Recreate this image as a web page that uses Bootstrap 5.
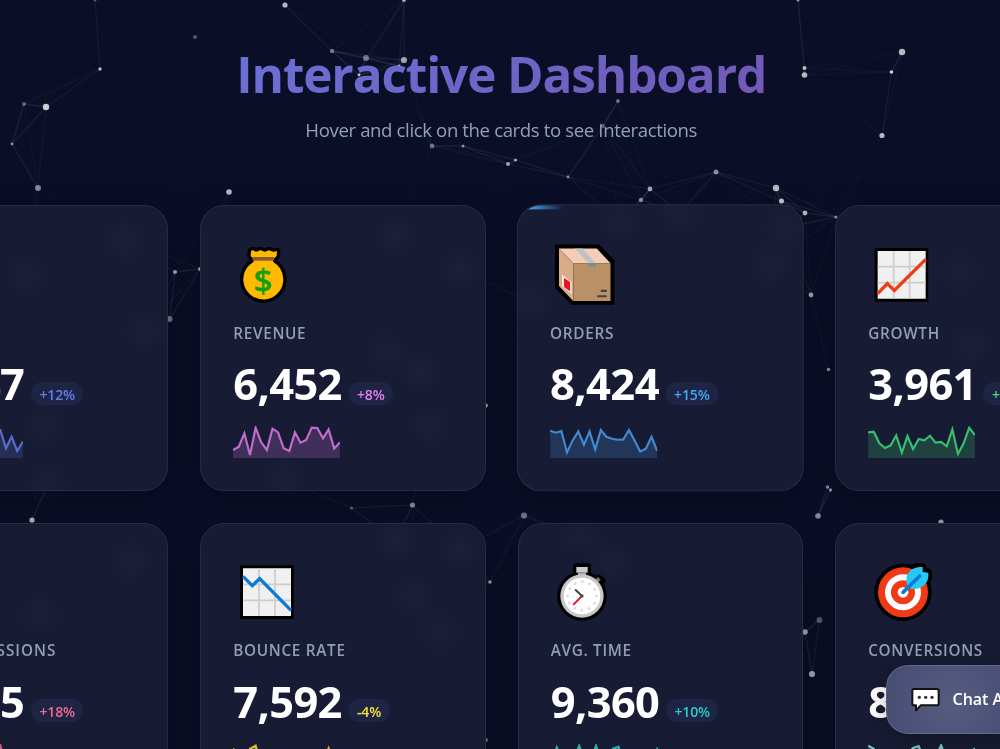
<!DOCTYPE html>
<html lang="en">
<head>
  <meta charset="UTF-8" />
  <meta name="viewport" content="width=device-width, initial-scale=1.0"/>
  <title>Interactive Dashboard</title>
  <link rel="stylesheet" href="https://cdn.jsdelivr.net/npm/bootstrap@5.3.2/dist/css/bootstrap.min.css" />
  <style>
    body {
      background: #0a0e27;
      color: #fff;
      font-family: "Open Sans", "Noto Sans", sans-serif;
      height: 100vh;
    }
    .network {
      position: fixed;
      inset: 0;
      width: 1000px;
      height: 749px;
      pointer-events: none;
    }
    .page {
      position: relative;
      padding-left: 2.4px;
      height: 749px;
    }
    .dash { width: 1237px; }
    .dash-title {
      font-size: 49.5px;
      line-height: 68px;
      letter-spacing: -1.13px;
      margin-top: 40px;
      background: linear-gradient(135deg, #667eea, #764ba2);
      -webkit-background-clip: text;
      background-clip: text;
      color: transparent;
    }
    .dash-sub {
      font-size: 18.6px;
      line-height: 28px;
      letter-spacing: -0.38px;
      margin-top: 8px;
      margin-bottom: 61px;
      color: #94a0b8;
    }
    .dash-grid {
      grid-template-columns: repeat(4, 285.5px);
      gap: 32px;
    }
    .stat {
      height: 286px;
      margin-bottom: -0.5px;
      padding: 36.5px 32px 0;
      border: 1px solid #292d43;
      border-radius: 24px;
      background: #171b33;
      box-shadow: 0 8px 32px rgba(0,0,0,0.25);
    }
    .stat.hovered {
      position: relative;
      overflow: hidden;
      transform: translate(-0.7px, -0.2px) scale(1.003);
    }
    .stat.hovered::before {
      content: "";
      position: absolute;
      top: 0;
      left: 0;
      width: 45px;
      height: 4px;
      background: linear-gradient(90deg, #4299e1 30%, transparent);
    }
    .stat-icon {
      width: 64px;
      height: 64px;
      margin-left: 1.4px;
    }
    .stat-label {
      font-size: 15.3px;
      font-weight: 600;
      line-height: 22px;
      letter-spacing: 0.7px;
      margin-top: 15px;
      color: #929eb6;
    }
    .stat-label.wide { letter-spacing: 0.97px; }
    .stat-value {
      font-size: 43.4px;
      font-weight: 700;
      line-height: 56px;
      letter-spacing: -0.6px;
    }
    .stat-line { margin-top: 12.5px; height: 56px; }
    .change {
      font-size: 14px;
      font-weight: 600;
      line-height: 23px;
      letter-spacing: -0.15px;
      height: 23px;
      padding: 1px 8.5px 0;
      border-radius: 12px;
      margin: 25.5px 0 0 6.6px;
      background: #1e2444;
    }
    .spark {
      width: 107px;
      height: 32px;
      margin-top: 14.3px;
    }
    .spark polyline { fill: none; stroke: currentColor; stroke-width: 6.5; opacity: .8; }
    .spark polygon { fill: currentColor; opacity: .2; }
    .c-indigo { color: #667eea; }
    .c-pink { color: #e580f0; }
    .c-blue { color: #4aa3f5; }
    .c-green { color: #43e17b; }
    .c-rose { color: #f56991; }
    .c-yellow { color: #fbe13a; }
    .c-teal { color: #2dccc4; }
    .c-mint { color: #8ee8dc; }
    .chat-btn {
      position: fixed;
      left: 885.5px;
      top: 665px;
      width: 190px;
      height: 68.5px;
      padding: 0 24px;
      border: 1px solid rgba(255,255,255,0.14);
      border-radius: 22px;
      background: radial-gradient(circle at 65px 36px, #565b80 0, #4d5278 45px, #3d4466 110px);
      color: #fff;
      font-size: 16px;
      font-weight: 600;
      box-shadow: 0 4px 20px rgba(0,0,0,0.25);
    }
    .chat-btn svg { width: 32px; height: 28px; margin: 1px 11px 0 -1px; }
  </style>
</head>
<body class="overflow-hidden">

  <svg class="network" id="network" viewBox="0 0 1000 749"></svg>

  <main class="page d-flex justify-content-center overflow-hidden">
    <div class="dash flex-shrink-0">
      <header class="text-center">
        <h1 class="dash-title fw-bold mb-0">Interactive Dashboard</h1>
        <p class="dash-sub">Hover and click on the cards to see Interactions</p>
      </header>

      <div class="dash-grid d-grid">
        <!-- Users -->
        <div class="stat">
          <svg class="stat-icon d-block"></svg>
          <div class="stat-label text-uppercase">Users</div>
          <div class="stat-line d-flex align-items-start">
            <span class="stat-value">2,847</span>
            <span class="change c-indigo">+12%</span>
          </div>
          <svg class="spark d-block c-indigo" viewBox="0 0 320 96" data-points="40,60,20,70,50,30,66,22,48,76,30,12,55,40,12,12,67,32,75,47"></svg>
        </div>

        <!-- Revenue -->
        <div class="stat">
          <svg class="stat-icon d-block" viewBox="0 0 192 192">
            <path stroke="#000" stroke-width="20" stroke-linejoin="round" d="M48 24q6-4 10 0q6 5 12 0q6-5 13 0q6 5 13 0q6-5 12 0q6 5 18 0l-1 14-11 12v6q13 8 21 20a60 60 0 1 1-100 0q8-12 21-20v-6l-9-12z"/>
            <path fill="#ffb900" d="M48 24q6-4 10 0q6 5 12 0q6-5 13 0q6 5 13 0q6-5 12 0q6 5 18 0l-1 14-11 12v6q13 8 21 20a60 60 0 1 1-100 0q8-12 21-20v-6l-9-12z"/>
            <path fill="#8e562e" d="M53 42h64v11H53z"/>
            <text x="85" y="149" text-anchor="middle" font-family="Open Sans" font-size="100" font-weight="600" fill="#10a010" stroke="#10a010" stroke-width="1">$</text>
          </svg>
          <div class="stat-label text-uppercase">Revenue</div>
          <div class="stat-line d-flex align-items-start">
            <span class="stat-value">6,452</span>
            <span class="change c-pink">+8%</span>
          </div>
          <svg class="spark d-block c-pink" viewBox="0 0 320 96" data-points="72,62,22,87,5,49,72,8,19,67,75,19,50,42,5,6,37,10,68,49"></svg>
        </div>

        <!-- Orders -->
        <div class="stat hovered">
          <svg class="stat-icon d-block" viewBox="0 0 192 192">
            <path d="M12 6H144L190 53V186H61L12 136z"/>
            <path fill="#f3cdb7" d="M24 18H137L178 62H67z"/>
            <path fill="#d9ab88" d="M24 18L67 62V176L24 130z"/>
            <path fill="#ba9066" d="M67 62H178V175H67z"/>
            <path fill="#bfc1c2" d="M71 18H94L134 62H112z"/>
            <path fill="#85898d" d="M112 62h22v12h-22z"/>
            <path fill="#f6e2dd" d="M33 96L62 118V154L33 132z"/>
            <path fill="#ee1122" d="M39 106L57 118V146L39 133z"/>
            <path fill="#444" d="M149 141h18v7h-18zM138 158h29v6h-29z"/>
          </svg>
          <div class="stat-label text-uppercase">Orders</div>
          <div class="stat-line d-flex align-items-start">
            <span class="stat-value">8,424</span>
            <span class="change c-blue">+15%</span>
          </div>
          <svg class="spark d-block c-blue" viewBox="0 0 320 96" data-points="14,20,15,79,43,16,56,16,70,12,32,38,41,40,12,43,76,68,32,74"></svg>
        </div>

        <!-- Growth -->
        <div class="stat">
          <svg class="stat-icon d-block" viewBox="0 0 192 192">
            <path d="M14 15h161v161H14z"/>
            <path fill="#f0f0f0" d="M23 24h144v143H23z"/>
            <path fill="none" stroke="#ccc" stroke-width="5" d="M71 24v143M119 24v143M23 71h144M23 119h144"/>
            <path fill="none" stroke="#f03a17" stroke-width="10" d="M23 152L52 122L73 142L167 49"/>
          </svg>
          <div class="stat-label text-uppercase">Growth</div>
          <div class="stat-line d-flex align-items-start">
            <span class="stat-value">3,961</span>
            <span class="change c-green">+23%</span>
          </div>
          <svg class="spark d-block c-green" viewBox="0 0 320 96" data-points="19,17,52,66,58,28,80,30,69,39,43,29,50,48,61,10,84,52,5,27"></svg>
        </div>

        <!-- Sessions -->
        <div class="stat">
          <svg class="stat-icon d-block"></svg>
          <div class="stat-label wide text-uppercase">Active Sessions</div>
          <div class="stat-line d-flex align-items-start">
            <span class="stat-value">5,535</span>
            <span class="change c-rose">+18%</span>
          </div>
          <svg class="spark d-block c-rose" viewBox="0 0 320 96" data-points="40,60,30,70,50,30,66,32,48,76,30,42,55,40,42,4,67,52,75,47"></svg>
        </div>

        <!-- Bounce rate -->
        <div class="stat">
          <svg class="stat-icon d-block" viewBox="0 0 192 192">
            <path d="M15 16h161v161H15z"/>
            <path fill="#f0f0f0" d="M24 25h144v143H24z"/>
            <path fill="none" stroke="#ccc" stroke-width="5" d="M72 25v143M120 25v143M24 73h144M24 121h144"/>
            <path fill="none" stroke="#0a7ad8" stroke-width="10" d="M24 49L52 77L74 56L168 151"/>
          </svg>
          <div class="stat-label text-uppercase">Bounce Rate</div>
          <div class="stat-line d-flex align-items-start">
            <span class="stat-value">7,592</span>
            <span class="change c-yellow">-4%</span>
          </div>
          <svg class="spark d-block c-yellow" viewBox="0 0 320 96" data-points="13,50,70,14,5,60,70,40,55,60,30,44,56,60,40,36,50,13,68,49"></svg>
        </div>

        <!-- Avg. time -->
        <div class="stat">
          <svg class="stat-icon d-block" viewBox="0 0 192 192">
            <g stroke="#000" stroke-width="20" stroke-linejoin="round">
              <circle cx="90" cy="108" r="64"/>
              <path d="M73 20h34v24H73zM132 62l8-8 10 8-8 8z"/>
            </g>
            <path fill="#ccc" d="M73 21h34v17H73z"/>
            <path fill="#a8a8a8" d="M78 38h24v8H78z"/>
            <path stroke="#777" stroke-width="12" d="M128 69l14-14"/>
            <circle cx="90" cy="108" r="65" fill="#c8c8c8"/>
            <circle cx="90" cy="108" r="55" fill="#fff"/>
            <circle cx="90" cy="108" r="43" fill="none" stroke="#ddd" stroke-width="9" stroke-linecap="round" stroke-dasharray="0 22.515"/>
            <path stroke="#444" stroke-width="6" stroke-linecap="round" d="M90 108L71 90"/>
            <path stroke="#e81232" stroke-width="6" stroke-linecap="round" d="M90 108L65 133"/>
            <circle cx="90" cy="108" r="5" fill="#555"/>
          </svg>
          <div class="stat-label text-uppercase">Avg. Time</div>
          <div class="stat-line d-flex align-items-start">
            <span class="stat-value">9,360</span>
            <span class="change c-teal">+10%</span>
          </div>
          <svg class="spark d-block c-teal" viewBox="0 0 320 96" data-points="50,10,50,60,45,5,55,50,5,60,40,14,8,60,50,40,55,45,60,10"></svg>
        </div>

        <!-- Conversions -->
        <div class="stat">
          <svg class="stat-icon d-block" viewBox="0 0 192 192">
            <circle cx="99" cy="97" r="86"/>
            <path stroke="#000" stroke-width="22" stroke-linejoin="round" d="M112 50Q114 24 142 21H158V36H174Q180 60 158 78L130 84L111 78z"/>
            <circle cx="99" cy="97" r="75" fill="#f03a17"/>
            <circle cx="99" cy="97" r="54" fill="#fff"/>
            <circle cx="99" cy="97" r="36" fill="#f03a17"/>
            <circle cx="99" cy="97" r="16" fill="#fff"/>
            <path fill="#28c8f5" d="M111 76Q104 48 120 32Q134 20 158 21V36L175 38Q178 60 162 76Q146 90 122 86z"/>
            <path stroke="#0a7ad8" stroke-width="11" stroke-linecap="round" d="M99 97L149 48"/>
          </svg>
          <div class="stat-label text-uppercase">Conversions</div>
          <div class="stat-line d-flex align-items-start">
            <span class="stat-value">8,213</span>
            <span class="change c-mint">+9%</span>
          </div>
          <svg class="spark d-block c-mint" viewBox="0 0 320 96" data-points="5,14,60,50,40,55,45,30,12,6,50,60,38,4,50,45,60,50,40,12"></svg>
        </div>
      </div>
    </div>
  </main>

  <svg class="network" viewBox="0 0 1000 749">
    <defs>
      <radialGradient id="glow">
        <stop offset="0" stop-color="#fff" stop-opacity=".022"/>
        <stop offset="1" stop-color="#fff" stop-opacity="0"/>
      </radialGradient>
    </defs>
    <g id="glows" fill="url(#glow)"></g>
  </svg>

  <button type="button" class="chat-btn d-flex align-items-center text-nowrap">
    <svg class="flex-shrink-0" viewBox="0 0 96 84">
      <path fill="#fff" stroke="#111" stroke-width="6" stroke-linejoin="round" d="M11 9H81Q86 9 86 14V53Q86 58 81 58H32L18 73V58H11Q7 58 7 53V14Q7 9 11 9z"/>
      <g fill="#333"><circle cx="28" cy="34" r="5"/><circle cx="47" cy="34" r="5"/><circle cx="66" cy="34" r="5"/></g>
    </svg>
    Chat Assistant
  </button>

  <script src="https://cdn.jsdelivr.net/npm/bootstrap@5.3.2/dist/js/bootstrap.bundle.min.js"></script>
  <script>
    // x, y, radius, opacity
    const particles = [
      [95,0,1.5,.3],[195,37,2,.3],[285,5,2.6,.7],[404,0,2,.6],[100,69,1.7,.7],[24,104,2,.35],[46,107,3.2,.8],
      [12,144,1.4,.5],[38,188,3,.5],[229,192,2.8,.7],[332,51,2.2,.4],[366,58,3,.4],[404,60,3.1,.6],[399,66,1.6,.7],
      [359,75,1.4,.7],[432,146,2.4,.4],[463,146,1.5,.5],[508,164,2,.6],[515.5,160,1.6,.6],[568,177,1.4,.5],
      [618,101,1.9,.4],[603,126,2,.3],[650,189,2.4,.6],[641,200,2.2,.5],[716,172,2.5,.5],[776,188,3.2,.7],
      [781.5,201,2.5,.75],[805,213,2.4,.7],[836,217,1.6,.5],[798,0,1.5,.6],[804.5,68,2,.7],[804.5,75,2.8,.7],
      [902,52,3.2,.7],[891.5,72,1.8,.8],[882,135.5,2.6,.7],[175,272,2,.6],[200,269,2,.6],[169.5,319,3,.4],
      [828.5,369.5,1.8,.5],[811,295,2.4,.6],[827.5,487,1.7,.5],[830.5,490,1.7,.5],[818,516,2.8,.5],[941,522,2.6,.6],
      [819.5,620,3,.3],[805,632,2.8,.6],[812,674,3.1,.6],[524,515.5,3.1,.4],[490,582,1.7,.6],[412.5,505,2.6,.5],
      [351.5,508,1.5,.35],[32,520,2.6,.7],[486,405.5,2,.6],[486,740,2,.4]
    ];
    const hidden = [
      [395,236],[460,270],[385,352],[420,372],[430,425],[285,480],[620,222],[680,213],[785,228],[770,265],
      [25,275],[145,330],[125,240],[45,425],[48,484],[396,540],[460,550],[415,597],[440,632],[580,535],
      [610,562],[130,560],[40,615],[530,302],[960,272],[970,345]
    ];
    const maxDist = 120;
    const nodes = particles.concat(hidden);
    let lines = "", dots = "", glows = "";
    nodes.forEach(([x, y], i) => {
      nodes.slice(i + 1).forEach(([x2, y2]) => {
        const d = Math.hypot(x - x2, y - y2);
        if (d < maxDist) {
          lines += `<line x1="${x}" y1="${y}" x2="${x2}" y2="${y2}" stroke="#fff" stroke-width="1.5" stroke-opacity="${(0.1 * (1 - d / maxDist)).toFixed(3)}"/>`;
        }
      });
    });
    particles.forEach(([x, y, r, o]) => {
      dots += `<circle cx="${x}" cy="${y}" r="${r}" fill="#fff" fill-opacity="${o}"/>`;
    });
    hidden.forEach(([x, y]) => {
      glows += `<circle cx="${x}" cy="${y}" r="28"/>`;
    });
    document.getElementById("network").innerHTML = lines + dots;
    document.getElementById("glows").innerHTML = glows;

    document.querySelectorAll(".spark").forEach(el => {
      const pts = el.dataset.points.split(",").map((v, i) => `${(i * 320 / 19).toFixed(1)},${v}`).join(" ");
      el.innerHTML = `<polygon points="0,96 ${pts} 320,96"/><polyline points="${pts}"/>`;
    });
  </script>

</body>
</html>
